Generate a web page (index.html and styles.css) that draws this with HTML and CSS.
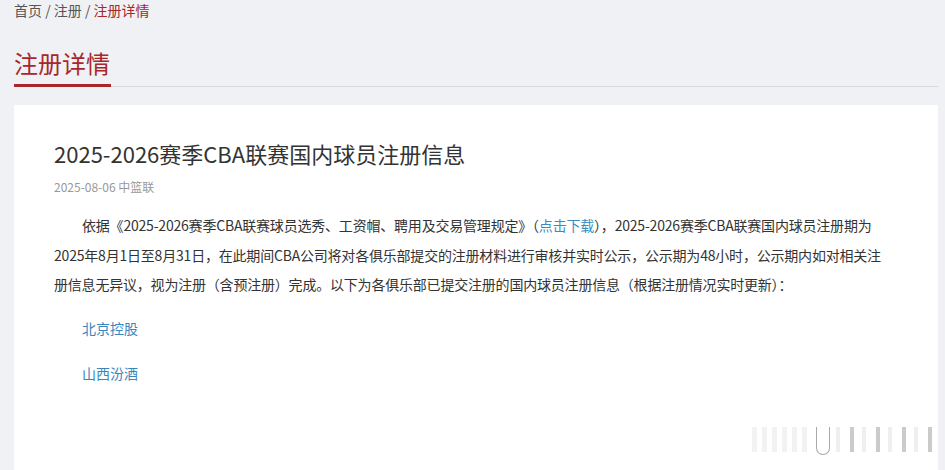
FILE: index.html
```html
<!DOCTYPE html>
<html lang="zh-CN">
<head>
  <meta charset="UTF-8">
  <meta name="viewport" content="width=device-width, initial-scale=1.0">
  <title>注册详情</title>
  <link rel="stylesheet" href="styles.css">
</head>
<body>

<div class="page">
  <div class="crumbs">
    <a href="#">首页</a> / <a href="#">注册</a> / <span class="current">注册详情</span>
  </div>

  <div class="section-head">
    <h2>注册详情</h2>
  </div>

  <div class="card">
    <h1>2025-2026赛季CBA联赛国内球员注册信息</h1>
    <div class="meta">2025-08-06 中篮联</div>

    <p class="body-text">依据《2025-2026赛季CBA联赛球员选秀、工资帽、聘用及交易管理规定》（<a href="#">点击下载</a>），2025-2026赛季CBA联赛国内球员注册期为2025年8月1日至8月31日，在此期间CBA公司将对各俱乐部提交的注册材料进行审核并实时公示，公示期为48小时，公示期内如对相关注册信息无异议，视为注册（含预注册）完成。以下为各俱乐部已提交注册的国内球员注册信息（根据注册情况实时更新）：</p>

    <ul class="clubs">
      <li><a href="#">北京控股</a></li>
      <li><a href="#">山西汾酒</a></li>
    </ul>

    <div class="mark">
      <span class="bars"></span>
      <span class="cup"></span>
      <span class="bars bars-right"></span>
    </div>
  </div>
</div>

</body>
</html>
```

FILE: styles.css
```css
html, body {
  margin: 0;
  padding: 0;
  height: 100%;
  overflow: hidden;
}

body {
  font-family: "Noto Sans CJK SC", "Noto Sans", sans-serif;
  font-size: 14px;
  color: #333;
  background-color: #f0f1f4;
}

a {
  text-decoration: none;
}

.page {
  padding: 0 7px 0 14px;
}

.crumbs {
  font-size: 14px;
  color: #555;
  line-height: 21px;
}

.crumbs a {
  color: #555;
}

.crumbs .current {
  color: #a8272b;
}

.section-head {
  margin-top: 21px;
  border-bottom: 1px solid #d8d9dd;
}

.section-head h2 {
  display: inline-block;
  margin: 0 0 -1px;
  font-size: 24px;
  font-weight: normal;
  line-height: 42px;
  color: #a8272b;
  border-bottom: 3px solid #a8272b;
  padding: 0 1px 0 0;
}

.card {
  position: relative;
  margin-top: 18px;
  background-color: #fff;
  padding: 28px 45px 120px 40px;
  min-height: 300px;
}

.card h1 {
  margin: 0;
  font-size: 22px;
  font-weight: normal;
  line-height: 40px;
  color: #333;
}

.meta {
  font-size: 12px;
  color: #999;
  line-height: 20px;
  margin-top: 4px;
}

.body-text {
  margin: 14px 0 0;
  line-height: 29.5px;
  letter-spacing: -0.2px;
  text-indent: 2em;
  color: #333;
}

.body-text a {
  color: #3a8cc0;
}

.clubs {
  list-style: none;
  margin: 16px 0 0;
  padding: 0 0 0 28px;
}

.clubs li {
  line-height: 24px;
  margin-bottom: 21px;
}

.clubs a {
  color: #3a86bb;
}

.mark {
  position: absolute;
  left: 738px;
  top: 322px;
  display: flex;
  align-items: flex-start;
  gap: 6px;
  opacity: 0.5;
}

.bars {
  width: 58px;
  height: 25px;
  background: repeating-linear-gradient(90deg, #e6e6e6 0 5px, #fff 5px 10px);
}

.bars-right {
  width: 100px;
  background: repeating-linear-gradient(90deg, #e0e0e0 0 4px, #fff 4px 14px, #999 14px 18px, #fff 18px 26px);
}

.cup {
  width: 14px;
  height: 28px;
  border: 1px solid #555;
  border-top: none;
  border-radius: 0 0 8px 8px;
  box-sizing: border-box;
}
```
